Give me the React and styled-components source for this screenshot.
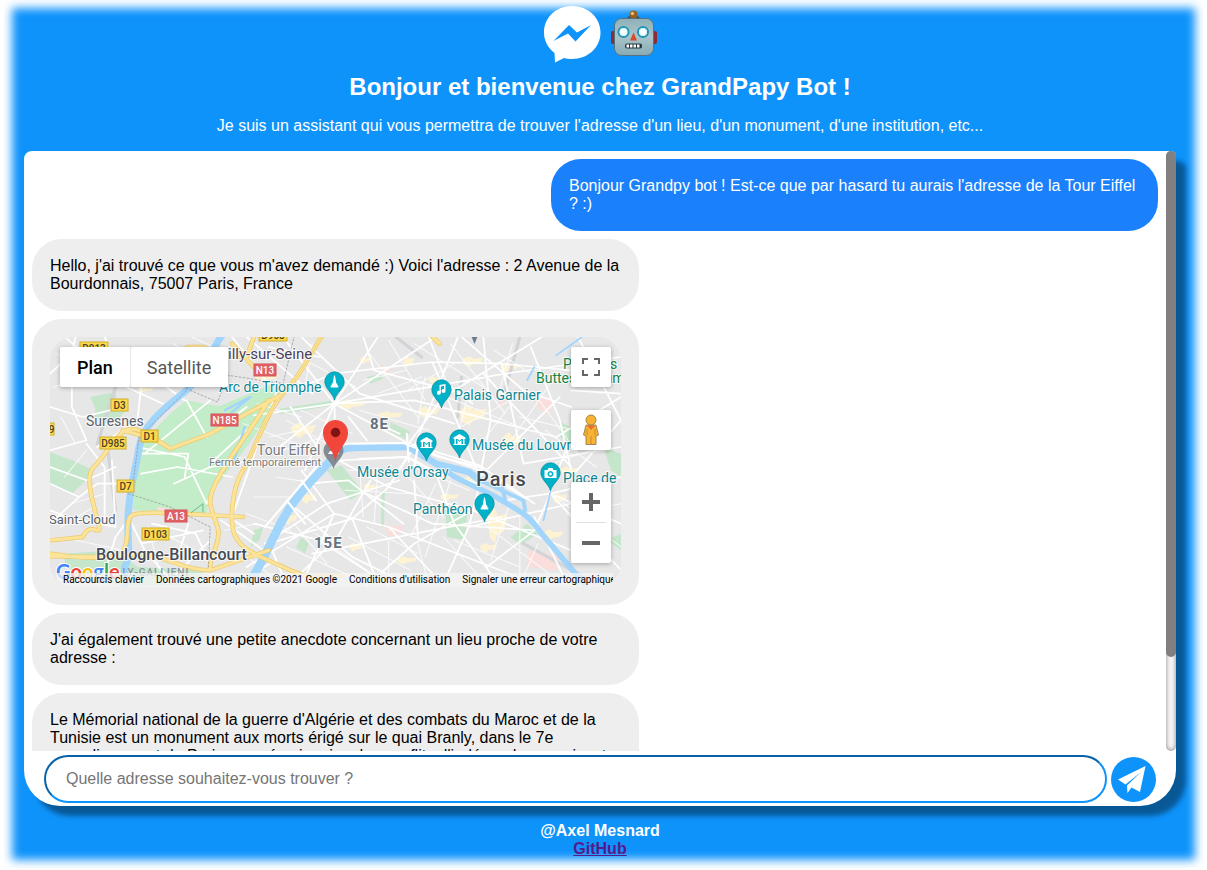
import React, { useState } from "react";
import styled, { createGlobalStyle } from "styled-components";

const GlobalStyle = createGlobalStyle`
  * { box-sizing: border-box; }
  body {
    margin: 0;
    background: #fff;
    font-family: "Liberation Sans", Arial, sans-serif;
    font-size: 16px;
    line-height: 18px;
  }
`;

const Page = styled.div`
  margin: 0 4px 2px;
  padding: 5px 27px 10px 20px;
  background: #0e93fb;
  box-shadow: inset 0 0 10px 8px #fff;
`;

const Header = styled.header`
  color: #fff;
  text-align: center;
`;

const Logos = styled.div`
  display: flex;
  justify-content: center;
  align-items: center;
  gap: 10px;
  height: 58px;
`;

const Title = styled.h1`
  margin: 10px 0 16px;
  font-size: 24px;
  line-height: 28px;
`;

const Intro = styled.p`
  margin: 0 0 16px;
`;

const Panel = styled.main`
  background: #fff;
  border-radius: 8px 8px 36px 36px;
  box-shadow: 10px 10px 5px rgba(0, 0, 0, 0.4);
`;

const Conversation = styled.div`
  display: flex;
  height: 600px;
`;

const Messages = styled.div`
  flex: 1;
  min-width: 0;
  display: flex;
  flex-direction: column;
  align-items: flex-start;
  gap: 8px;
  padding: 8px;
  overflow-y: auto;
  scrollbar-width: none;
`;

const ScrollTrack = styled.div`
  flex: none;
  width: 10px;
  border-radius: 5px;
  background: #f8f8f8;
  box-shadow: inset 0 0 5px grey;
`;

const ScrollThumb = styled.div`
  width: 10px;
  height: 506px;
  border-radius: 5px;
  background: grey;
`;

const Bubble = styled.div`
  flex: none;
  box-sizing: content-box;
  width: calc(50% + 8px);
  padding: 18px;
  border-radius: 30px;
  align-self: ${(p) => (p.$mine ? "flex-end" : "flex-start")};
  background: ${(p) => (p.$mine ? "#1b80fc" : "#eee")};
  color: ${(p) => (p.$mine ? "#fff" : "#000")};
`;

const Form = styled.form`
  display: flex;
  align-items: center;
  gap: 4px;
  padding: 4px 20px 3px;
`;

const Question = styled.input`
  flex: 1;
  min-width: 0;
  height: 48px;
  padding: 0 20px;
  border: 2px inset #0e93fb;
  border-radius: 24px;
  background: #fff;
  font: inherit;
  outline: none;
  &::placeholder { color: #757575; }
`;

const Send = styled.button`
  flex: none;
  width: 45px;
  height: 45px;
  padding: 0;
  border: 0;
  border-radius: 50%;
  background: #0e93fb;
  cursor: pointer;
  svg { display: block; }
`;

const Footer = styled.footer`
  display: flex;
  flex-direction: column;
  align-items: center;
  margin-top: 16px;
  color: #fff;
  font-weight: bold;
`;

const FooterLink = styled.a`
  color: #551a8b;
`;

const MapBox = styled.div`
  position: relative;
  height: 250px;
  overflow: hidden;
  border-radius: 24px;
  background: #e8e8e8;
  font-family: Roboto, sans-serif;
`;

const MapArt = styled.svg`
  display: block;
  width: 100%;
  height: 250px;
`;

const MapTypes = styled.div`
  position: absolute;
  top: 10px;
  left: 10px;
  display: flex;
  border-radius: 2px;
  box-shadow: 0 1px 4px rgba(0, 0, 0, 0.3);
`;

const MapType = styled.button`
  height: 40px;
  padding: 0 17px;
  border: 0;
  border-radius: 2px;
  background: #fff;
  box-shadow: ${(p) => (p.$active ? "none" : "inset 1px 0 #e6e6e6")};
  color: ${(p) => (p.$active ? "#000" : "#565656")};
  font: ${(p) => (p.$active ? 500 : 400)} 18px Roboto, sans-serif;
`;

const MapTools = styled.div`
  position: absolute;
  top: 10px;
  right: 10px;
  display: flex;
  flex-direction: column;
  width: 40px;
`;

const ToolGroup = styled.div`
  margin-bottom: ${(p) => p.$after || 0}px;
  border-radius: 2px;
  background: #fff;
  box-shadow: 0 1px 4px rgba(0, 0, 0, 0.3);
`;

const Tool = styled.button`
  display: block;
  width: 40px;
  height: 40px;
  padding: 0;
  border: 0;
  background: transparent;
  svg { display: block; margin: auto; }
`;

const Rule = styled.div`
  height: 1px;
  margin: 0 5px;
  background: #e0e0e0;
`;

const Credits = styled.div`
  position: absolute;
  bottom: 0;
  left: 7px;
  right: 8px;
  display: flex;
  height: 14px;
  overflow: hidden;
  background: rgba(245, 245, 245, 0.75);
`;

const Credit = styled.a`
  flex: none;
  padding: 0 6px;
  color: #000;
  font-size: 10px;
  line-height: 14px;
  text-decoration: none;
  white-space: nowrap;
`;

const MessengerLogo = () => (
  <svg width="58" height="58" viewBox="0 0 58 58" aria-hidden="true">
    <path fill="#fff" d="M29 1C13 1 1 12.500 1 27.500c0 8 4 15.500 10.500 20.500L12 57.500l9-4.500c2.500.7 5 1 8 1 16 0 28.500-11.500 28.500-26.500S45 1 29 1z" />
    <path fill="#0e93fb" d="M10.500 36 26 20l8 7.500L48 20 32.500 36.500l-7.500-8z" />
  </svg>
);

const RobotLogo = () => (
  <svg width="46" height="48" viewBox="0 0 46 48" aria-hidden="true">
    <defs>
      <linearGradient id="face" x1="0" y1="0" x2="0" y2="1">
        <stop offset="0" stopColor="#8fb0b9" />
        <stop offset=".5" stopColor="#a9c5ca" />
        <stop offset="1" stopColor="#86aab5" />
      </linearGradient>
    </defs>
    <rect x="0" y="21" width="6" height="13" rx="2" fill="#8d2938" />
    <rect x="40" y="21" width="6" height="13" rx="2" fill="#8d2938" />
    <ellipse cx="22.500" cy="8.500" rx="6.500" ry="3" fill="#394b56" />
    <circle cx="22.500" cy="4.500" r="4" fill="#97601f" />
    <circle cx="21.500" cy="3.500" r="1.700" fill="#f2bd77" />
    <rect x="3.500" y="8.500" width="39" height="37" rx="7" fill="url(#face)" stroke="#53727e" strokeWidth="1" />
    {[12.5, 32].map((x) => (
      <g key={x}>
        <circle cx={x} cy="22" r="5" fill="#fff" stroke="#2394b5" strokeWidth="2" />
        <circle cx={x} cy="22" r="3.500" fill="#fff" stroke="#c9f5fb" strokeWidth="1" />
      </g>
    ))}
    <path d="M22.500 22.500l3.500 8h-7z" fill="#d54c2d" />
    <rect x="14" y="33.500" width="17" height="5" rx="2" fill="#24353b" />
    {[15.5, 19, 22.5, 26].map((x) => (
      <rect key={x} x={x} y="34.500" width="2.500" height="3" fill="#fff" />
    ))}
  </svg>
);

const PARKS = [
  "M375 190 465 208 600 145 640 170 540 330 440 470 430 530 228 520 240 330 330 230z",
  "M110 180 180 165 185 200 205 225 180 255 120 245 125 215z",
  "M0 345 60 370 120 400 100 430 60 470 0 440z",
  "M180 640 40 650 40 690 190 745 420 745 420 700 240 690z",
  "M760 400 800 385 860 465 825 490z",
  "M630 215 780 190 780 205 630 232z",
  "M935 255 990 285 975 305 935 285z",
  "M870 120 905 110 915 125 880 140z",
  "M1085 520 1145 530 1140 610 1090 600z",
  "M1265 600 1310 560 1340 590 1290 625z",
  "M1400 255 1431 270 1431 320 1400 300z",
  "M910 460 920 460 917 570 909 570z",
  "M560 580 585 570 575 610 550 630z",
  "M690 600 710 620 700 650 675 630z",
  "M1520 330 1568 350 1568 420 1540 400z",
  "M1530 610 1568 590 1568 640z",
];

const YELLOW_BLOCKS = [
  [660, 260, 70, 40], [790, 190, 80, 24], [900, 225, 70, 20], [560, 110, 70, 22], [850, 60, 30, 20],
  [1010, 210, 60, 30], [1120, 210, 80, 50], [1240, 290, 55, 45], [1130, 420, 55, 30], [1200, 520, 55, 90],
  [1070, 470, 55, 20], [690, 470, 40, 28], [640, 530, 40, 30], [820, 620, 40, 22], [1380, 470, 40, 28],
  [1130, 60, 60, 26], [970, 60, 30, 28], [1240, 80, 50, 22], [1400, 390, 50, 25], [950, 660, 60, 20],
  [1350, 580, 60, 28], [1040, 120, 36, 20], [1180, 620, 45, 25], [860, 440, 36, 20], [240, 150, 45, 15],
];

const PINK_BLOCKS = ["M900 85 940 90 925 115z", "M1330 170 1380 190 1370 230 1340 215z", "M920 570 970 565 960 590 930 600z", "M1310 640 1400 655 1390 700 1310 690z", "M1230 170 1250 200 1235 210z", "M295 510 330 515 325 530 295 525z", "M740 245 765 250 755 265z"];

const MAIN_STREETS = `M781 200 640 0M781 200 900 0M781 200 1060 0M781 200 1250 110 1568 60M781 200 985 320M781 200 784 340
M781 200 630 330M781 200 560 235M781 200 700 400M781 200 1000 190 1250 260M640 170 780 110 1050 75 1240 80 1431 100
M690 0 850 170 1110 260M860 0 890 100 1100 160M985 320 1180 385 1330 500M800 320 975 320 1180 400 1300 480
M800 370 980 360 1060 410 1180 440M784 365 930 450 1160 520 1431 640M930 450 1000 330 1120 0M1050 75 1180 420
M985 320 1080 180 1350 0M1180 420 1210 250 1190 0M1180 420 1400 180M1210 250 1390 300 1568 180M1190 110 1431 390
M1320 30 1400 250 1431 400M1240 80 1300 380 1568 330M1374 470 1568 420M1374 470 1568 560M1374 470 1568 700
M1374 470 1330 580 1200 690M1250 490 1370 470 1420 330M1180 440 1150 570 1080 740M1160 520 1000 620 870 745
M1060 410 1110 560 1230 740M980 360 930 450 830 545 600 620M690 400 780 530 930 570 1080 745M780 530 690 745
M650 490 830 660 980 740M560 560 740 610 930 745M590 620 760 500 960 430M830 545 900 740M870 470 1050 560 1330 580
M930 570 1330 740M540 690 780 530M720 650 1000 590 1240 540M1330 540 1420 740M1150 570 1431 500M610 640 650 745
M880 430 790 600 660 740M700 440 820 430 970 560M1000 430 1010 600M660 210 740 340M820 240 870 310M900 260 960 290
M500 0 600 140M540 0 720 170M600 30 740 60M1040 0 1090 140 1160 200M1431 160 1568 170M1450 0 1568 250M1431 420 1568 250
M1130 0 1300 160 1431 210M0 110 60 50 70 0M60 100 60 210 100 310 0 340M0 210 90 240 200 210M150 0 210 150 310 200
M40 0 130 80M250 150 240 250 130 330M0 390 100 430 180 390M0 440 80 480 0 560M80 480 130 440 220 440M0 520 60 545 180 570
M140 745 180 600 220 540M170 370 180 570M100 320 150 390 150 560M250 350 380 350 370 420M250 410 350 390 500 420
M320 150 370 190M440 190 260 350M375 190 430 300 540 210M240 330 370 360 430 500M340 440 440 390 560 370 640 380
M480 390 430 500M560 260 450 370M620 170 500 540M470 550 600 650M220 550 260 640 340 740M280 560 400 590 440 680
M250 620 420 580M320 740 440 610M380 560 350 660M490 540 560 590M500 745 620 670`;

const MINOR_STREETS = `M650 40 840 150M720 20 700 150M870 40 1010 240M930 10 1030 190M1000 20 1190 150M1100 20 1250 230M1270 20 1230 180
M1030 120 1010 260M850 220 1040 280M1090 180 1290 270M1110 280 1300 170M1150 160 1110 340M1260 210 1170 340M1290 240 1440 280
M1380 130 1260 320M1330 170 1450 350M820 400 960 400M850 390 860 540M900 390 890 560M810 460 990 470M960 390 1080 540
M1000 390 1150 460M1060 440 990 600M1100 430 1030 660M870 570 1010 650M820 600 990 700M730 590 870 700M670 560 760 680
M650 630 830 720M1080 600 1180 720M1110 610 1290 690M1190 560 1370 710M1260 510 1210 670M1290 540 1290 720M1340 620 1290 745
M1420 530 1568 500M1400 490 1568 630M1450 420 1530 560M1380 380 1510 330M1360 280 1500 390M600 300 690 280M610 350 750 300
M650 250 760 320M690 220 830 290M570 200 690 240M530 260 700 330M620 420 740 440M560 480 680 480M540 530 660 580
M20 50 110 120M10 150 130 110M30 240 70 320M100 340 40 420M60 500 150 470M30 570 120 510M30 600 200 640M270 570 300 700
M330 600 430 660M520 640 610 720M480 580 570 560M260 40 350 110M340 20 430 100M390 0 550 80M930 610 930 740M1010 620 1040 745
M1110 80 980 160M1220 40 1320 110M900 170 1020 120M860 130 980 100`;

const HIGHWAYS = `M745 0 C700 80 690 110 640 170 S560 350 530 400 490 560 510 600 560 650 640 690 720 720 800 715
M600 190 C550 290 430 440 440 500 S475 570 455 630 440 680 440 700 M440 700 600 640M440 700 C350 700 310 640 200 655 S80 660 0 650
M0 658 180 660 C230 640 200 550 225 535 S350 530 530 540M0 610 90 600 C110 550 140 600 135 570 S90 420 120 390 170 310 200 285 270 290 330 335
M330 335 440 290 640 170M330 335 C310 320 290 305 200 280M500 20 560 90 M310 70 380 30 420 30 490 60 540 60 560 0M1050 0 1070 20`;

const RoadSign = ({ x, y, w, label, red }) => (
  <g>
    <rect x={x} y={y} width={w} height="12" fill={red ? "#e06066" : "#fdd94d"} stroke={red ? "#d85259" : "#d2ae2b"} />
    <text x={x + w / 2} y={y + 10} textAnchor="middle" fontSize="10" fontWeight="500" fill={red ? "#fff" : "#4d432a"}>{label}</text>
  </g>
);

const GLYPHS = {
  tower: "M-.5-6.500h1l.5 3 .8 5h1v2h1v2h-7.600v-2h1v-2h1l.8-5z",
  music: "M-2-5 4-6v7a2 2 0 1 1-1.500-2v-3.200L-.6-3.500V2.500A2 2 0 1 1-2 .8z",
  museum: "M0-6 6-2.500v1.500h-1v5h1V5H-6V4h1v-5h-1v-1.500zM-3.500-1v5h1.500V0l2 2 2-2v4h1.500v-5H2L0 .7-2-1z",
  camera: "M-6-3h3l1-2h4l1 2h3v8H-6zM0-2a3 3 0 1 0 .01 0zM0-.4a1.400 1.400 0 1 1-.01 0z",
};

const Pin = ({ x, y, glyph }) => (
  <g transform={`translate(${x} ${y})`}>
    <path d="M0 18C-1.500 11-9.700 7-9.700-.5A9.700 9.700 0 0 1 9.700-.5C9.700 7 1.500 11 0 18z" fill="#00b1c8" stroke="#04899b" strokeWidth=".7" />
    <path d={GLYPHS[glyph]} fill="#fff" fillRule="evenodd" />
  </g>
);

const LABELS = [
  [178, 22, "illy-sur-Seine", 15, "#4a3f5c"],
  [36, 89, "Suresnes", 14, "#5a6069"],
  [169, 55, "Arc de Triomphe", 14, "#0b8793"],
  [404, 63, "Palais Garnier", 14, "#0b8793"],
  [422, 113, "Musée du Louvre", 14, "#0b8793"],
  [307, 140, "Musée d'Orsay", 14, "#0b8793"],
  [363, 177, "Panthéon", 14, "#0b8793"],
  [513, 146, "Place de", 14, "#0b8793"],
  [207, 118, "Tour Eiffel", 14, "#777b80"],
  [159, 129, "Fermé temporairement", 11, "#777b80"],
  [-1, 187, "Saint-Cloud", 13, "#5a6069"],
  [46, 223, "Boulogne-Billancourt", 16, "#454b54", 500],
  [513, 32, "Parc des", 14, "#128443"],
  [486, 46, "Buttes-Chaumont", 14, "#128443"],
  [320, 92, "8E", 15, "#657180", 700, 1],
  [264, 211, "15E", 15, "#657180", 700, 1],
  [426, 149, "Paris", 20, "#454b54", 500, 1],
];

const SIGNS = [
  [30, 5, 28, "D913"], [209, -8, 28, "D908"], [61, 62, 17, "D3"], [91, 93, 17, "D1"], [50, 100, 26, "D985"],
  [67, 143, 17, "D7"], [92, 191, 27, "D103"], [-13, 86, 17, "D39"], [204, 27, 22, "N13", true], [161, 77, 27, "N185", true], [115, 173, 22, "A13", true],
];

const ParisMap = () => (
  <MapArt viewBox="0 0 571 250" preserveAspectRatio="xMidYMid slice" role="img" aria-label="Carte de Paris">
    <rect width="571" height="250" fill="#e7e7e8" />
    <g transform="scale(.3642 .3333)" fill="none" strokeLinejoin="round" strokeLinecap="round">
      {YELLOW_BLOCKS.map(([x, y, w, h]) => (
        <path key={`${x}-${y}`} fill="#fdf3d3" d={`M${x} ${y + h * 0.3}l${w * 0.35} ${-h * 0.4} ${w * 0.2} ${h * 0.3} ${w * 0.45} ${-h * 0.1}-${w * 0.15} ${h * 0.6}-${w * 0.35} ${h * 0.1}-${w * 0.1} ${h * 0.3}-${w * 0.25}-${h * 0.2}z`} />
      ))}
      {PARKS.map((d, i) => <path key={i} d={d} fill={i === 0 ? "#c3ecc8" : "#c5e6cb"} />)}
      {PINK_BLOCKS.map((d) => <path key={d} d={d} fill="#f9dedc" />)}
      <path d="M1130 120 1120 240M1290 0 1250 160M950 0 1020 60M180 150 130 320M160 350 180 520M1300 620 1500 740" stroke="#d2d4d7" strokeWidth="9" />
      <path d={MINOR_STREETS} stroke="#fff" strokeWidth="3" opacity=".8" />
      <path d={MAIN_STREETS} stroke="#fff" strokeWidth="5" />
      <g stroke="#a2d5fb">
        <path strokeWidth="20" d="M475 -10C430 60 430 110 375 160S255 260 245 330 220 440 215 530 225 650 205 690L205 750" />
        <path strokeWidth="24" d="M540 745C590 680 620 560 680 480S740 410 775 365" strokeLinecap="butt" />
        <path strokeWidth="20" d="M775 365C800 320 840 335 985 330L1060 380 1150 405 1180 430" />
        <path strokeWidth="16" d="M1060 380C1110 430 1180 450 1240 490S1310 530 1350 590L1470 745" />
        <path strokeWidth="11" d="M1180 430 1300 490 1305 520M1240 445 1250 490" />
        <path strokeWidth="5" d="M1374 465 1355 550M1460 0 1390 55M1330 90 1310 130" />
        <path strokeWidth="7" d="M535 270 520 320 505 370M480 220 550 180M500 225 545 185" />
      </g>
      <path d="M850 365 980 360 1070 410M830 320 970 318 1070 360 1180 390M735 385 590 570M980 290 985 375M1015 300 1000 390M690 430 730 490M650 490 700 560" stroke="#fff" strokeWidth="6" />
      <path d={HIGHWAYS} stroke="#edc96a" strokeWidth="13" />
      <path d={HIGHWAYS} stroke="#fbe49a" strokeWidth="9" />
      <path d="M745 0C700 80 690 110 640 170S560 350 530 400" stroke="#edc96a" strokeWidth="2" />
      <path d="M385 160 460 195 490 115 640 140 670 0M215 470 330 510 440 570 435 690M390 110 375 160 245 300 225 460" stroke="#8e9298" strokeWidth="2" strokeDasharray="5 6" />
      <path d="M388 527 420 500 420 525" stroke="#48a86a" strokeWidth="2" />
    </g>

    {SIGNS.map(([x, y, w, label, red]) => <RoadSign key={label} x={x} y={y} w={w} label={label} red={red} />)}
    <text x="66" y="239" fontSize="10" fontWeight="500" fill="#8993a0" letterSpacing="1">LLY-GALLIENI</text>
    {LABELS.map(([x, y, text, size, fill, weight, spacing]) => (
      <text key={text} x={x} y={y} fontSize={size} fill={fill} fontWeight={weight || 400} letterSpacing={spacing || 0} stroke="#fff" strokeWidth="2" strokeOpacity=".8" paintOrder="stroke">{text}</text>
    ))}

    <path d="M420-4h9l-4.500 11z" fill="#6b7c8a" />
    <Pin x={284.5} y={45} glyph="tower" />
    <Pin x={391.5} y={53} glyph="music" />
    <Pin x={376.5} y={106} glyph="museum" />
    <Pin x={409.5} y={103} glyph="museum" />
    <Pin x={500.5} y={136} glyph="camera" />
    <Pin x={434.5} y={167} glyph="tower" />
    <path d="M283.500 132c-1.500-7-10-11-10-18.500a10 10 0 0 1 20 0c0 7.500-8.500 11.500-10 18.500z" fill="#858b92" />
    <path d="M278 117h11l-2-3h-7z" fill="#fff" />
    <path d="M285.500 125c-1.500-13-12.500-18-12.500-29.500a12.500 12.500 0 0 1 25 0c0 11.500-11 16.500-12.500 29.500z" fill="#f2463b" />
    <circle cx="285.500" cy="95.500" r="4.700" fill="#7d1511" />
    <text x="6" y="242" fontFamily="Lato, sans-serif" fontSize="20" fontWeight="700" stroke="#fff" strokeWidth="2" paintOrder="stroke">
      <tspan fill="#4285f4">G</tspan><tspan fill="#ea4335">o</tspan><tspan fill="#fbbc04">o</tspan><tspan fill="#4285f4">g</tspan><tspan fill="#34a853">l</tspan><tspan fill="#ea4335">e</tspan>
    </text>
  </MapArt>
);

const Pegman = () => (
  <svg width="20" height="32" viewBox="0 0 20 32">
    <g fill="#f9b233" stroke="#8b7444" strokeWidth=".8">
      <path d="M5 11h10l2.500 10-2.500 1v8.500H5V22l-2.500-1z" />
      <circle cx="10" cy="6" r="5" />
    </g>
    <path d="M5.500 11.500h9L10 16z" fill="#e27533" />
    <path d="M10 22v8M6 15v6M14 15v6" stroke="#b98432" strokeWidth=".8" />
  </svg>
);

const MapCard = () => (
  <MapBox>
    <ParisMap />
    <MapTypes>
      <MapType type="button" $active>Plan</MapType>
      <MapType type="button">Satellite</MapType>
    </MapTypes>
    <MapTools>
      <ToolGroup $after={23}>
        <Tool type="button" aria-label="Plein écran">
          <svg width="18" height="18" viewBox="0 0 18 18"><path d="M1 6V1h5M12 1h5v5M17 12v5h-5M6 17H1v-5" fill="none" stroke="#666" strokeWidth="2" /></svg>
        </Tool>
      </ToolGroup>
      <ToolGroup $after={32}>
        <Tool type="button" aria-label="Street View"><Pegman /></Tool>
      </ToolGroup>
      <ToolGroup>
        <Tool type="button" aria-label="Zoom avant">
          <svg width="18" height="18" viewBox="0 0 18 18"><path d="M7 0h4v7h7v4h-7v7H7v-7H0V7h7z" fill="#666" /></svg>
        </Tool>
        <Rule />
        <Tool type="button" aria-label="Zoom arrière">
          <svg width="18" height="18" viewBox="0 0 18 18"><path d="M0 7h18v4H0z" fill="#666" /></svg>
        </Tool>
      </ToolGroup>
    </MapTools>
    <Credits>
      <Credit href="#raccourcis">Raccourcis clavier</Credit>
      <Credit href="#donnees">Données cartographiques ©2021 Google</Credit>
      <Credit href="#conditions">Conditions d'utilisation</Credit>
      <Credit href="#signaler">Signaler une erreur cartographique</Credit>
    </Credits>
  </MapBox>
);

export default function App() {
  const [scrolled, setScrolled] = useState(0);
  const onScroll = (e) => {
    const { scrollTop, scrollHeight, clientHeight } = e.currentTarget;
    setScrolled(scrollTop / Math.max(1, scrollHeight - clientHeight));
  };

  return (
    <>
      <GlobalStyle />
      <Page>
        <Header>
          <Logos>
            <MessengerLogo />
            <RobotLogo />
          </Logos>
          <Title>Bonjour et bienvenue chez GrandPapy Bot !</Title>
          <Intro>Je suis un assistant qui vous permettra de trouver l'adresse d'un lieu, d'un monument, d'une institution, etc...</Intro>
        </Header>
        <Panel>
          <Conversation>
            <Messages onScroll={onScroll}>
              <Bubble $mine>Bonjour Grandpy bot ! Est-ce que par hasard tu aurais l'adresse de la Tour Eiffel ? :)</Bubble>
              <Bubble>Hello, j'ai trouvé ce que vous m'avez demandé :) Voici l'adresse : 2 Avenue de la Bourdonnais, 75007 Paris, France</Bubble>
              <Bubble><MapCard /></Bubble>
              <Bubble>J'ai également trouvé une petite anecdote concernant un lieu proche de votre adresse :</Bubble>
              <Bubble>
                Le Mémorial national de la guerre d'Algérie et des combats du Maroc et de la Tunisie est un monument aux morts érigé sur le quai Branly, dans le 7e arrondissement de Paris, en mémoire vive des conflits d'indépendance suivant la Seconde Guerre mondiale. Il rend hommage aux soldats morts pour la France lors de la guerre d'Algérie et des combats du Maroc et de la Tunisie. Le monument est composé de trois colonnes alignées face à la Seine, sur lesquelles défilent les noms des soldats et des harkis.
              </Bubble>
            </Messages>
            <ScrollTrack aria-hidden="true">
              <ScrollThumb style={{ marginTop: `${Math.round(scrolled * 94)}px` }} />
            </ScrollTrack>
          </Conversation>
          <Form onSubmit={(e) => e.preventDefault()}>
            <Question type="text" aria-label="Adresse" placeholder="Quelle adresse souhaitez-vous trouver ?" />
            <Send type="submit" aria-label="Envoyer">
              <svg width="45" height="45" viewBox="0 0 45 45">
                <path d="M34.500 9 7 22.500l7.500 5L30 15 16 28.500l.5 7.500 4-5.500 8.500 4.500z" fill="#fff" />
              </svg>
            </Send>
          </Form>
        </Panel>
        <Footer>
          <span>@Axel Mesnard</span>
          <FooterLink href="https://github.com">GitHub</FooterLink>
        </Footer>
      </Page>
    </>
  );
}
